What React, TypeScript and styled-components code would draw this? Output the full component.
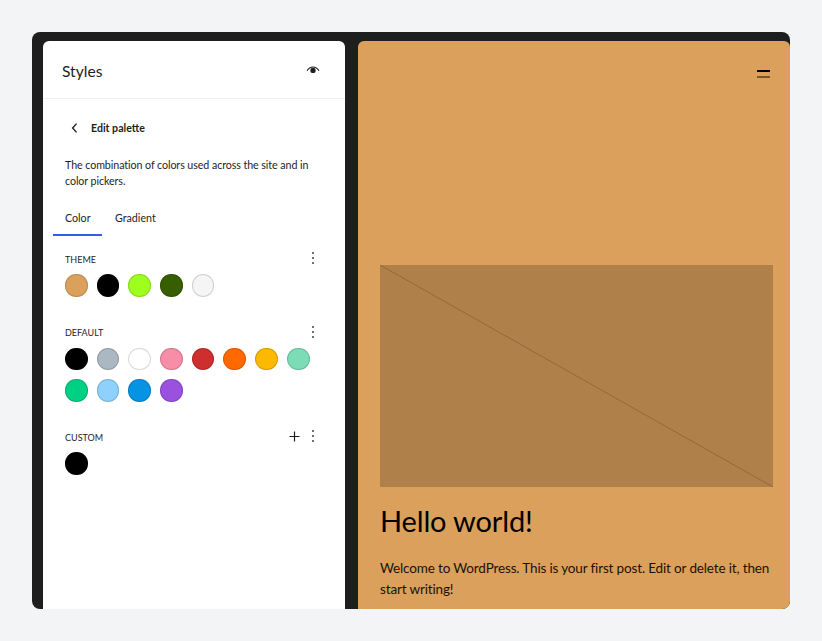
import { FC } from 'react'
import styled, { createGlobalStyle } from 'styled-components'

const GlobalStyle = createGlobalStyle`
  html, body {
    margin: 0;
    padding: 0;
    background: #f3f4f6;
  }
  body {
    font-family: Lato, 'Noto Sans', sans-serif;
    color: #1e1e1e;
  }
`

const theme = ['#dba15c', '#000000', '#9eff1f', '#375e00', '#f5f5f5']
const defaults = [
  '#000000', '#abb8c3', '#ffffff', '#f78da7', '#cf2e2e', '#ff6900', '#fcb900', '#7bdcb5',
  '#00d084', '#8ed1fc', '#0693e3', '#9b51e0'
]
const custom = ['#000000']

const Page = styled.div`
  width: 822px;
  height: 641px;
  padding: 32px;
  box-sizing: border-box;
  overflow: hidden;
`

const Frame = styled.div`
  width: 758px;
  height: 577px;
  box-sizing: border-box;
  padding: 9px 0 0 11px;
  display: flex;
  gap: 13px;
  background: #1e1e1e;
  border-radius: 8px;
  overflow: hidden;
`

const Sidebar = styled.aside`
  width: 302px;
  background: #fff;
  border-radius: 6px 6px 0 0;
  display: flex;
  flex-direction: column;
`

const SidebarHeader = styled.header`
  height: 58px;
  box-sizing: border-box;
  padding: 2px 23px 0 19px;
  display: flex;
  align-items: center;
  justify-content: space-between;
  border-bottom: 1px solid #f0f0f0;
`

const Title = styled.h2`
  margin: 0;
  font-size: 15.6px;
  font-weight: 400;
`

const BackRow = styled.div`
  margin: 21px 0 0 24px;
  height: 16px;
  display: flex;
  align-items: center;
  gap: 8px;
`

const BackLabel = styled.span`
  font-size: 10.6px;
  font-weight: 700;
`

const Description = styled.p`
  margin: 21px 30px 0 22px;
  font-size: 10.7px;
  line-height: 16px;
  letter-spacing: -0.08px;
`

const Tabs = styled.div`
  margin: 12px 0 0 10px;
  display: flex;
  gap: 1px;
`

const Tab = styled.div<{ $active?: boolean; $width: number }>`
  width: ${p => p.$width}px;
  height: 35px;
  box-sizing: border-box;
  padding: 9px 0 0 12px;
  font-size: 10.7px;
  line-height: 16px;
  border-bottom: 2px solid ${p => (p.$active ? '#3858e9' : 'transparent')};
`

const Section = styled.section<{ $top: number }>`
  margin: ${p => p.$top}px 30px 0 22px;
`

const SectionHead = styled.div`
  height: 16px;
  display: flex;
  align-items: center;
  justify-content: space-between;
`

const SectionLabel = styled.span`
  font-size: 9px;
  text-transform: uppercase;
`

const SectionActions = styled.div`
  margin-bottom: 2px;
  display: flex;
  align-items: center;
  gap: 11px;
`

const Swatches = styled.div`
  margin-top: 7px;
  display: flex;
  flex-wrap: wrap;
  gap: 9px;
`

const Swatch = styled.div<{ $color: string }>`
  width: 22.7px;
  height: 22.7px;
  box-sizing: border-box;
  border-radius: 50%;
  background: ${p => p.$color};
  box-shadow: inset 0 0 0 1px rgba(0, 0, 0, 0.15);
`

const Preview = styled.main`
  width: 432px;
  box-sizing: border-box;
  padding: 0 17px 0 22px;
  background: #dba15c;
  border-radius: 6px 6px 0 0;
  display: flex;
  flex-direction: column;
  color: #000;
`

const MenuButton = styled.div`
  margin: 29px 3px 0 auto;
  width: 13px;
  height: 4px;
  border-top: 2px solid #000;
  border-bottom: 2px solid #7a5528;
`

const Placeholder = styled.div`
  margin-top: 187px;
  height: 222px;
  background: rgba(0, 0, 0, 0.2);
  flex-shrink: 0;
`

const Diagonal = styled.svg`
  display: block;
  width: 100%;
  height: 100%;
`

const PostTitle = styled.h1`
  margin: 14px 0 0 0;
  font-size: 29px;
  font-weight: 400;
  line-height: 40px;
  letter-spacing: -0.15px;
`

const PostText = styled.p`
  margin: 17px 0 0 0;
  font-size: 13.5px;
  line-height: 21px;
  letter-spacing: -0.15px;
  color: #1a1208;
`

const EyeSvg = styled.svg`
  margin-bottom: 2px;
`

const EyeIcon: FC = () => (
  <EyeSvg width="18" height="18" viewBox="0 0 24 24">
    <path d="M4 13c1.6-2.6 4.3-5 8-5s6.400 2.400 8 5" fill="none" stroke="#1e1e1e" strokeWidth="1.4" />
    <circle cx="12" cy="12.6" r="3.5" fill="#1e1e1e" />
  </EyeSvg>
)

const BackIcon: FC = () => (
  <svg width="16" height="16" viewBox="0 0 16 16" fill="none" stroke="#1e1e1e" strokeWidth="1.4">
    <path d="M9.6 3.6 5.6 8l4 4.4" />
  </svg>
)

const MoreIcon: FC = () => (
  <svg width="4" height="14" viewBox="0 0 4 14" fill="#1e1e1e">
    <rect x="1.2" y="1.2" width="1.6" height="1.6" />
    <rect x="1.2" y="6.2" width="1.6" height="1.6" />
    <rect x="1.2" y="11.2" width="1.6" height="1.6" />
  </svg>
)

const PlusIcon: FC = () => (
  <svg width="11" height="11" viewBox="0 0 11 11" stroke="#1e1e1e" strokeWidth="1.2">
    <path d="M5.5 0.5v10M0.5 5.500h10" />
  </svg>
)

interface PaletteProps {
  label: string
  colors: string[]
  top: number
  canAdd?: boolean
}

const Palette: FC<PaletteProps> = ({ label, colors, top, canAdd }) => (
  <Section $top={top}>
    <SectionHead>
      <SectionLabel>{label}</SectionLabel>
      <SectionActions>
        {canAdd && <PlusIcon />}
        <MoreIcon />
      </SectionActions>
    </SectionHead>
    <Swatches>
      {colors.map((color, i) => (
        <Swatch key={i} $color={color} />
      ))}
    </Swatches>
  </Section>
)

const App: FC = () => (
  <Page>
    <GlobalStyle />
    <Frame>
      <Sidebar>
        <SidebarHeader>
          <Title>Styles</Title>
          <EyeIcon />
        </SidebarHeader>
        <BackRow>
          <BackIcon />
          <BackLabel>Edit palette</BackLabel>
        </BackRow>
        <Description>
          The combination of colors used across the site and in color pickers.
        </Description>
        <Tabs>
          <Tab $active $width={49}>Color</Tab>
          <Tab $width={80}>Gradient</Tab>
        </Tabs>
        <Palette label="Theme" colors={theme} top={15} />
        <Palette label="Default" colors={defaults} top={28} />
        <Palette label="Custom" colors={custom} top={27} canAdd />
      </Sidebar>
      <Preview>
        <MenuButton />
        <Placeholder>
          <Diagonal viewBox="0 0 393 222" preserveAspectRatio="none">
            <line x1="0" y1="0" x2="393" y2="222" stroke="#94693a" strokeWidth="1" />
          </Diagonal>
        </Placeholder>
        <PostTitle>Hello world!</PostTitle>
        <PostText>
          Welcome to WordPress. This is your first post. Edit or delete it, then start writing!
        </PostText>
      </Preview>
    </Frame>
  </Page>
)

export default App
